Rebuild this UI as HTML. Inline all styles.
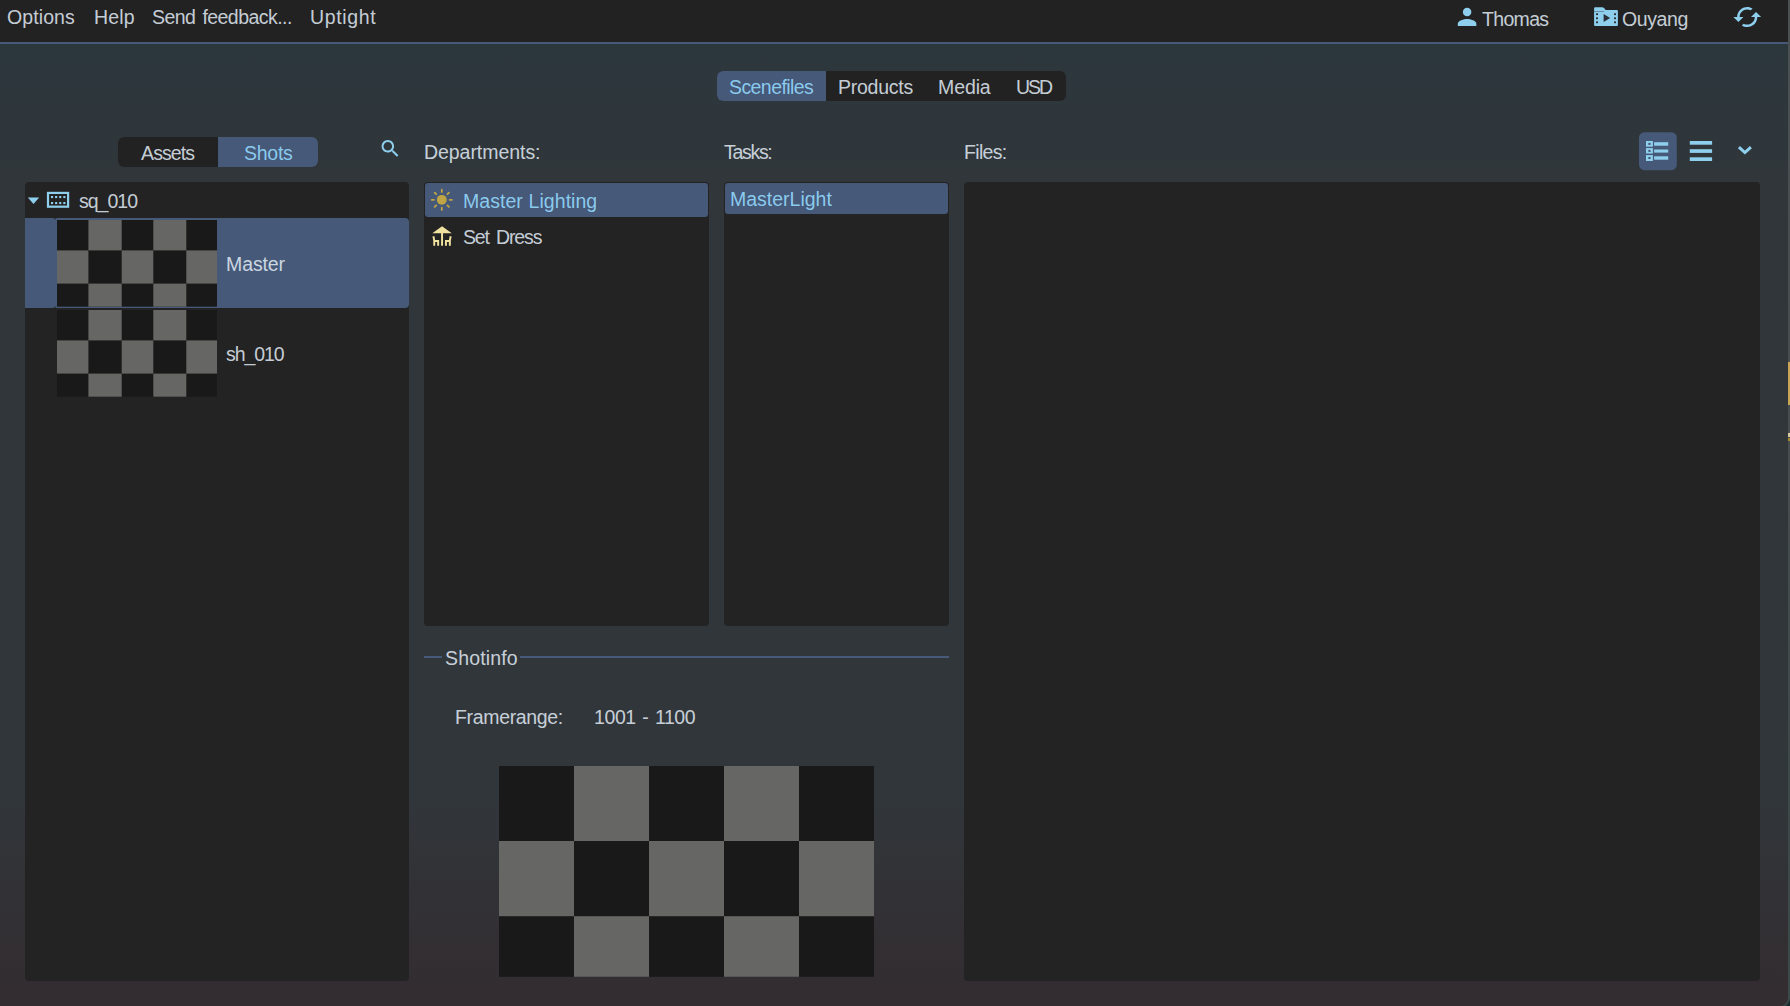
<!DOCTYPE html>
<html lang="en">
<head>
<meta charset="utf-8">
<title>Project Browser</title>
<style>
html,body{margin:0;padding:0;}
body{width:1790px;height:1006px;overflow:hidden;position:relative;
 font-family:"Liberation Sans",sans-serif;font-size:19.5px;color:rgba(226,236,246,0.86);
 background:#152b2d;}
#frame{position:absolute;left:0;top:0;width:1790px;height:1008px;overflow:hidden;border-bottom-right-radius:11px;background:linear-gradient(to bottom,#4b5152 0,#474d4f 500px,#3d4849 800px,#3c4a4a 1006px);}
#win{position:absolute;left:0;top:0;width:1788px;height:1006px;overflow:hidden;
 border-bottom-right-radius:8px;
 background:linear-gradient(to bottom,#2a373d 0px,#31363a 201px,#31363a 805px,#332c30 1006px);}
#edge{position:absolute;left:1788px;top:0;width:2px;height:1006px;}
#edge i{position:absolute;left:0;width:2px;display:block;}
.abs{position:absolute;}
#menubar{position:absolute;left:0;top:0;width:1788px;height:42px;background:#222222;border-bottom:2px solid #465978;}
.t{position:absolute;white-space:nowrap;line-height:24px;height:24px;}
.sel{color:rgba(146,214,250,0.92);}
.panel{position:absolute;background:#232323;border-radius:4px;}
.hl{position:absolute;background:#465978;}
svg{position:absolute;overflow:visible;}
</style>
</head>
<body>
<div id="frame">
<div id="win">

<!-- ===== menu bar ===== -->
<div id="menubar"></div>
<span class="t" id="m1" style="letter-spacing:0.1px;left:7px;top:5px;">Options</span>
<span class="t" id="m2" style="letter-spacing:0.2px;left:94px;top:5px;">Help</span>
<span class="t" id="m3" style="letter-spacing:-0.55px;word-spacing:2.2px;left:152px;top:5px;">Send feedback...</span>
<span class="t" id="m4" style="letter-spacing:0.65px;left:310px;top:5px;">Uptight</span>
<span class="t" id="u1" style="letter-spacing:-0.68px;left:1482px;top:7px;">Thomas</span>
<span class="t" id="u2" style="letter-spacing:-0.4px;left:1622px;top:7px;">Ouyang</span>

<!-- ===== main tabs ===== -->
<div class="abs" style="left:717px;top:71px;width:349px;height:30px;background:#222222;border-radius:6px;"></div>
<div class="hl" style="left:717px;top:71px;width:109px;height:30px;border-radius:6px 0 0 6px;"></div>
<span class="t sel" id="tb1" style="letter-spacing:-0.58px;left:729px;top:75px;">Scenefiles</span>
<span class="t" id="tb2" style="letter-spacing:-0.26px;left:838px;top:75px;">Products</span>
<span class="t" id="tb3" style="letter-spacing:-0.1px;left:938px;top:75px;">Media</span>
<span class="t" id="tb4" style="letter-spacing:-2px;left:1016px;top:75px;">USD</span>

<!-- ===== assets / shots ===== -->
<div class="abs" style="left:118px;top:137px;width:200px;height:30px;background:#222222;border-radius:6px;"></div>
<div class="hl" style="left:218px;top:137px;width:100px;height:30px;border-radius:0 6px 6px 0;"></div>
<span class="t" id="as1" style="letter-spacing:-0.88px;left:141px;top:141px;">Assets</span>
<span class="t sel" id="as2" style="letter-spacing:-0.25px;left:244px;top:141px;">Shots</span>

<!-- ===== labels ===== -->
<span class="t" id="l1" style="letter-spacing:-0.05px;left:424px;top:140px;">Departments:</span>
<span class="t" id="l2" style="letter-spacing:-1.3px;left:724px;top:140px;">Tasks:</span>
<span class="t" id="l3" style="letter-spacing:-0.68px;left:964px;top:140px;">Files:</span>

<!-- ===== tree panel ===== -->
<div class="panel" style="left:25px;top:182px;width:384px;height:799px;"></div>
<div class="hl" style="left:25px;top:218px;width:30px;height:90px;border-radius:0 2px 2px 0;"></div>
<div class="hl" style="left:55px;top:218px;width:354px;height:90px;border-radius:2px 4px 4px 2px;"></div>
<span class="t" id="tr1" style="letter-spacing:-1px;left:79px;top:189px;">sq_010</span>
<span class="t" id="tr2" style="letter-spacing:-0.1px;left:226px;top:252px;">Master</span>
<span class="t" id="tr3" style="letter-spacing:-1.1px;left:226px;top:342px;">sh_010</span>

<!-- ===== departments panel ===== -->
<div class="panel" style="left:424px;top:182px;width:285px;height:444px;"></div>
<div class="hl" style="left:425px;top:183px;width:283px;height:34px;border-radius:3px;"></div>
<span class="t sel" id="d1" style="letter-spacing:0.05px;word-spacing:0.2px;left:463px;top:189px;">Master Lighting</span>
<span class="t" id="d2" style="letter-spacing:-1.15px;word-spacing:3px;left:463px;top:225px;">Set Dress</span>

<!-- ===== tasks panel ===== -->
<div class="panel" style="left:724px;top:182px;width:225px;height:444px;"></div>
<div class="hl" style="left:725px;top:183px;width:223px;height:31px;border-radius:3px;"></div>
<span class="t sel" id="k1" style="letter-spacing:0px;left:730px;top:187px;">MasterLight</span>

<!-- ===== files panel ===== -->
<div class="panel" style="left:964px;top:182px;width:796px;height:799px;"></div>

<!-- ===== shotinfo ===== -->
<div class="abs" style="left:424px;top:656px;width:18px;height:2px;background:#465978;"></div>
<div class="abs" style="left:520px;top:656px;width:429px;height:2px;background:#465978;"></div>
<span class="t" id="s1" style="letter-spacing:0.15px;left:445px;top:646px;">Shotinfo</span>
<span class="t" id="s2" style="letter-spacing:-0.34px;left:455px;top:705px;">Framerange:</span>
<span class="t" id="s3" style="letter-spacing:-0.4px;word-spacing:1.5px;left:594px;top:705px;">1001 - 1100</span>
<svg style="left:0;top:0;" width="1788" height="1006" viewBox="0 0 1788 1006" shape-rendering="auto">
  <rect x="57" y="220" width="160.0" height="86.7" fill="#191919"/>
  <rect x="88.4" y="220" width="33.3" height="30.4" fill="#666764"/>
  <rect x="153.3" y="220" width="33.0" height="30.4" fill="#666764"/>
  <rect x="57" y="250.4" width="31.4" height="33.2" fill="#666764"/>
  <rect x="121.7" y="250.4" width="31.6" height="33.2" fill="#666764"/>
  <rect x="186.3" y="250.4" width="30.7" height="33.2" fill="#666764"/>
  <rect x="88.4" y="283.6" width="33.3" height="23.1" fill="#666764"/>
  <rect x="153.3" y="283.6" width="33.0" height="23.1" fill="#666764"/>
  <rect x="57" y="310" width="160.0" height="86.7" fill="#191919"/>
  <rect x="88.4" y="310" width="33.3" height="30.4" fill="#666764"/>
  <rect x="153.3" y="310" width="33.0" height="30.4" fill="#666764"/>
  <rect x="57" y="340.4" width="31.4" height="33.2" fill="#666764"/>
  <rect x="121.7" y="340.4" width="31.6" height="33.2" fill="#666764"/>
  <rect x="186.3" y="340.4" width="30.7" height="33.2" fill="#666764"/>
  <rect x="88.4" y="373.6" width="33.3" height="23.1" fill="#666764"/>
  <rect x="153.3" y="373.6" width="33.0" height="23.1" fill="#666764"/>
  <rect x="499" y="766" width="375.0" height="210.8" fill="#191919"/>
  <rect x="574" y="766" width="75.0" height="75.0" fill="#666764"/>
  <rect x="724" y="766" width="75.0" height="75.0" fill="#666764"/>
  <rect x="499" y="841" width="75.0" height="75.2" fill="#666764"/>
  <rect x="649" y="841" width="75.0" height="75.2" fill="#666764"/>
  <rect x="799" y="841" width="75.0" height="75.2" fill="#666764"/>
  <rect x="574" y="916.2" width="75.0" height="60.6" fill="#666764"/>
  <rect x="724" y="916.2" width="75.0" height="60.6" fill="#666764"/>
</svg>


<!-- tree arrow + sequence icon -->
<svg style="left:0;top:0;" width="1788" height="1006" viewBox="0 0 1788 1006">
 <g fill="#8fcfee">
  <polygon points="27.8,197.4 39.2,197.4 33.5,204"/>
  <rect x="48" y="192.9" width="20.1" height="13.8" fill="none" stroke="#8fcfee" stroke-width="2.2"/>
  <g>
   <rect x="51" y="196" width="2.1" height="2.1"/><rect x="55.1" y="196" width="2.1" height="2.1"/><rect x="59.2" y="196" width="2.1" height="2.1"/><rect x="63.3" y="196" width="2.1" height="2.1"/>
   <rect x="51" y="202" width="2.1" height="2.1"/><rect x="55.1" y="202" width="2.1" height="2.1"/><rect x="59.2" y="202" width="2.1" height="2.1"/><rect x="63.3" y="202" width="2.1" height="2.1"/>
  </g>
  <!-- search -->
  <g transform="translate(378.7,137.1) scale(0.96)"><path d="M15.5 14h-.79l-.28-.27C15.41 12.59 16 11.11 16 9.5 16 5.91 13.09 3 9.5 3S3 5.91 3 9.5 5.91 16 9.5 16c1.61 0 3.09-.59 4.23-1.57l.27.28v.79l5 4.99L20.49 19l-4.99-5zm-6 0C7.01 14 5 11.99 5 9.5S7.01 5 9.5 5 14 7.01 14 9.5 11.99 14 9.5 14z"/></g>
  <!-- person -->
  <circle cx="1467.1" cy="11.9" r="4.25"/><path d="M1457.8 25.9v-2.2c0-3.1 6.1-4.7 9.3-4.7s9.25 1.6 9.25 4.7v2.2z"/>
  <!-- folder film -->
  <path d="M1595.1 7.2h7.2q1.6 0 2.4 1.5l0.9 1.4h11.3q1 0 1 1v13.8q0 1-1 1h-21.8q-1 0-1-1v-16.7q0-1 1-1z"/>
  <!-- refresh (cached) -->
  <g transform="translate(1732.1,1.9) scale(1.26)"><path d="M19 8l-4 4h3c0 3.31-2.69 6-6 6-1.01 0-1.97-.25-2.8-.7l-1.46 1.46C8.97 19.54 10.43 20 12 20c4.42 0 8-3.58 8-8h3l-4-4zM6 12c0-3.31 2.69-6 6-6 1.01 0 1.97.25 2.8.7l1.46-1.46C15.03 4.46 13.57 4 12 4c-4.42 0-8 3.58-8 8H1l4 4 4-4H6z"/></g>
  <!-- chevron -->
  <polyline points="1738.9,147.1 1744.9,152.5 1750.9,147.1" fill="none" stroke="#8fcfee" stroke-width="3"/>
  <!-- hamburger -->
  <rect x="1689.8" y="141" width="22.3" height="3.7"/><rect x="1689.8" y="149.2" width="22.3" height="3.7"/><rect x="1689.8" y="157.3" width="22.3" height="3.7"/>
 </g>
 <!-- folder film details -->
 <g fill="#222222">
  <rect x="1594.1" y="11.2" width="10" height="0.6" opacity="0.6"/>
  <rect x="1596.1" y="13.3" width="1.8" height="1.8"/><rect x="1596.1" y="17.4" width="1.8" height="1.8"/><rect x="1596.1" y="21.4" width="1.8" height="1.8"/>
  <rect x="1614.1" y="13.3" width="1.8" height="1.8"/><rect x="1614.1" y="17.4" width="1.8" height="1.8"/><rect x="1614.1" y="21.4" width="1.8" height="1.8"/>
  <polygon points="1603.6,13.9 1610.1,17.9 1603.6,21.9" fill="#2a3238"/>
 </g>
 <!-- list button -->
 <rect x="1639" y="132.2" width="37.8" height="38" rx="5.5" fill="#465978"/>
 <g fill="#8fcfee">
  <rect x="1654.1" y="142.2" width="14.1" height="3.5"/><rect x="1654.1" y="149.5" width="14.1" height="3.1"/><rect x="1654.1" y="156.3" width="14.1" height="3.4"/>
 </g>
 <g fill="#8fcfee">
  <rect x="1646" y="141" width="6.9" height="5.7"/><rect x="1646" y="148.1" width="6.9" height="5.4"/><rect x="1646" y="155.1" width="6.9" height="5.9"/>
 </g>
 <g fill="#3f5270">
  <rect x="1648.4" y="142.9" width="2.1" height="2"/><rect x="1648.4" y="149.9" width="2.1" height="2"/><rect x="1648.4" y="157" width="2.1" height="2"/>
 </g>
 <!-- sun -->
 <g transform="translate(441.8,199.8)" fill="#bfa544" stroke="#bfa544" stroke-width="1.8" stroke-linecap="round">
  <circle r="4.9" stroke="none"/>
  <line x1="0" y1="-7.9" x2="0" y2="-10.1"/><line x1="0" y1="7.9" x2="0" y2="10.1"/>
  <line x1="-7.9" y1="0" x2="-10.1" y2="0"/><line x1="7.9" y1="0" x2="10.1" y2="0"/>
  <line x1="5.6" y1="5.6" x2="7.1" y2="7.1"/><line x1="-5.6" y1="5.6" x2="-7.1" y2="7.1"/>
  <line x1="5.6" y1="-5.6" x2="7.1" y2="-7.1"/><line x1="-5.6" y1="-5.6" x2="-7.1" y2="-7.1"/>
 </g>
 <!-- deck -->
 <g transform="translate(430.35,224.35) scale(0.975)" fill="#efe1a0"><path d="M22 9L12 2 2 9h9v13h2V9z"/><path d="M4.14 12l-1.96.37.82 4.37V22h2l.02-4H7v4h2v-6H4.9zm14.96 4H15v6h2v-4h1.98l.02 4h2v-5.26l.82-4.37-1.96-.37z"/></g>
</svg>


</div>
<div id="edge"><i style="top:362px;height:43px;background:#c9a653;"></i><i style="top:433px;height:4px;background:#d8c9a0;"></i><i style="top:438px;height:3px;background:#a8862f;"></i></div>
</div>
</body>
</html>
